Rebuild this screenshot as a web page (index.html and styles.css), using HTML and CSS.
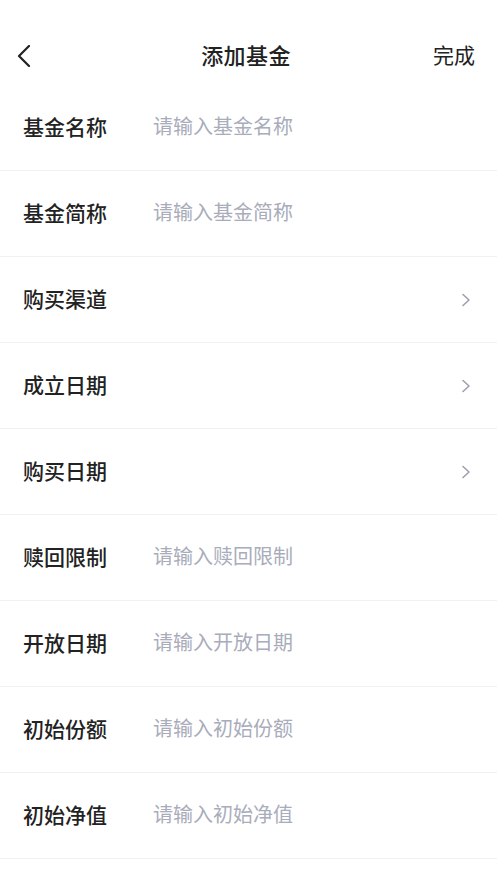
FILE: index.html
```html
<!DOCTYPE html>
<html lang="zh">
<head>
<meta charset="utf-8">
<title>添加基金</title>
<link rel="stylesheet" href="styles.css">
</head>
<body>
<div class="page">
  <header class="nav">
    <div class="nav-back">
      <svg width="14" height="22" viewBox="0 0 14 22"><path d="M12 1 L2 11 L12 21" fill="none" stroke="#222" stroke-width="2.2" stroke-linecap="round" stroke-linejoin="round"/></svg>
    </div>
    <div class="nav-title">添加基金</div>
    <div class="nav-done">完成</div>
  </header>
  <main class="form">
    <div class="row"><span class="label">基金名称</span><span class="ph">请输入基金名称</span></div>
    <div class="row"><span class="label">基金简称</span><span class="ph">请输入基金简称</span></div>
    <div class="row"><span class="label">购买渠道</span><span class="ph"></span><svg class="arrow" width="10" height="14" viewBox="0 0 10 14"><path d="M2 1.5 L8 7 L2 12.5" fill="none" stroke="#9b9dab" stroke-width="1.5" stroke-linecap="round" stroke-linejoin="round"/></svg></div>
    <div class="row"><span class="label">成立日期</span><span class="ph"></span><svg class="arrow" width="10" height="14" viewBox="0 0 10 14"><path d="M2 1.5 L8 7 L2 12.5" fill="none" stroke="#9b9dab" stroke-width="1.5" stroke-linecap="round" stroke-linejoin="round"/></svg></div>
    <div class="row"><span class="label">购买日期</span><span class="ph"></span><svg class="arrow" width="10" height="14" viewBox="0 0 10 14"><path d="M2 1.5 L8 7 L2 12.5" fill="none" stroke="#9b9dab" stroke-width="1.5" stroke-linecap="round" stroke-linejoin="round"/></svg></div>
    <div class="row"><span class="label">赎回限制</span><span class="ph">请输入赎回限制</span></div>
    <div class="row"><span class="label">开放日期</span><span class="ph">请输入开放日期</span></div>
    <div class="row"><span class="label">初始份额</span><span class="ph">请输入初始份额</span></div>
    <div class="row"><span class="label">初始净值</span><span class="ph">请输入初始净值</span></div>
  </main>
</div>
</body>
</html>
```
FILE: styles.css
```css
* { box-sizing: border-box; }
html, body { margin: 0; padding: 0; background: #fff; }
body {
  font-family: "Noto Sans CJK SC", "Noto Sans", sans-serif;
  color: #222;
}
.page { width: 497px; }
.nav {
  margin-top: 26px;
  height: 59px;
  display: flex;
  align-items: center;
  justify-content: space-between;
  padding: 0 22px 4px 17px;
}
.nav-back { display: flex; align-items: center; width: 60px; padding-top: 4px; }
.nav-title {
  font-size: 22px;
  font-weight: 500;
  color: #222;
  letter-spacing: 0.4px;
}
.nav-done {
  font-size: 21px;
  color: #222;
  width: 60px;
  text-align: right;
}
.form { display: flex; flex-direction: column; }
.row {
  height: 86px;
  display: flex;
  align-items: center;
  padding: 0 26px 4px 23px;
  border-bottom: 1px solid #f1f1f3;
}
.label {
  width: 130px;
  font-size: 21px;
  font-weight: 500;
  color: #222;
}
.ph {
  flex: 1;
  font-size: 20px;
  color: #a9acba;
}
.arrow { flex: none; margin-top: 4px; }
```
